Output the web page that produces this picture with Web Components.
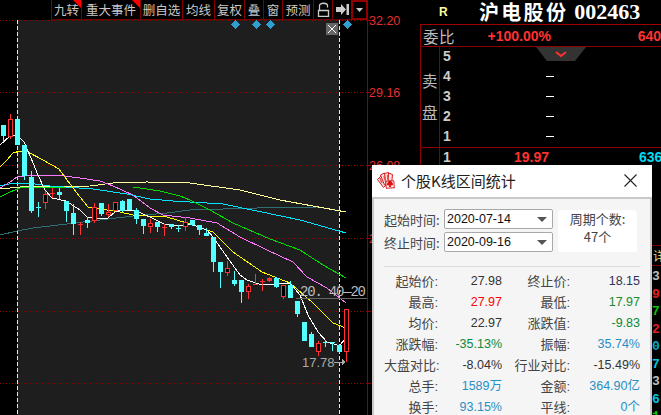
<!DOCTYPE html>
<html lang="zh"><head><meta charset="utf-8"><title>K</title>
<style>html,body{margin:0;padding:0;background:#000;overflow:hidden;width:661px;height:415px}
body{font-family:"Liberation Sans","Noto Sans CJK SC",sans-serif}</style></head><body>
<trade-app>
<tool-bar slot="bar">
<tool-btn w="30" flag>九转</tool-btn><tool-btn w="59" flag>重大事件</tool-btn><tool-btn w="42">删自选</tool-btn><tool-btn w="32">均线</tool-btn><tool-btn w="30">复权</tool-btn><tool-btn w="19">叠</tool-btn><tool-btn w="19">窗</tool-btn><tool-btn w="31">预测</tool-btn>
<tool-btn w="19" icon="lock"></tool-btn><tool-btn w="19" icon="pin"></tool-btn><tool-btn w="15" icon="down" strong></tool-btn>
</tool-bar>
<quote-panel slot="quote"></quote-panel>
<stats-dialog slot="dialog">
<stat-row a="起始价:" b="27.98" c="终止价:" d="18.15" dc="#33335a"></stat-row>
<stat-row a="最高:" b="27.97" bc="#f00" c="最低:" d="17.97" dc="#1a8a2a"></stat-row>
<stat-row a="均价:" b="22.97" c="涨跌值:" d="-9.83" dc="#0a8a3a"></stat-row>
<stat-row a="涨跌幅:" b="-35.13%" bc="#0a8a3a" c="振幅:" d="35.74%" dc="#2a8fc4"></stat-row>
<stat-row a="大盘对比:" b="-8.04%" c="行业对比:" d="-15.49%"></stat-row>
<stat-row a="总手:" b="1589万" bc="#2a8fc4" c="金额:" d="364.90亿" dc="#2a8fc4"></stat-row>
<stat-row a="换手:" b="93.15%" bc="#2a8fc4" c="平线:" d="0个" dc="#2a8fc4"></stat-row>
</stats-dialog>
</trade-app>
<script>
const def=(n,c)=>customElements.define(n,c);
class Base extends HTMLElement{constructor(){super();this.attachShadow({mode:'open'})}}
def('trade-app',class extends Base{connectedCallback(){this.shadowRoot.innerHTML=`<style>
:host{display:block;position:relative;width:661px;height:415px;overflow:hidden;background:#000}
.main{display:flex;width:661px;height:415px}
.left{width:420px;height:415px;position:relative;flex:none}
.bar{position:absolute;right:53px;top:0}
::slotted(stats-dialog){position:absolute;left:372px;top:165px}
</style>
<div class="main"><div class="left"><k-chart></k-chart><div class="bar"><slot name="bar"></slot></div></div><slot name="quote"></slot></div>
<slot name="dialog"></slot>`}});
def('tool-bar',class extends Base{connectedCallback(){this.shadowRoot.innerHTML=`<style>:host{display:flex;height:20px;box-sizing:border-box;border-right:1px solid #900000}</style><slot></slot>`}});
def('tool-btn',class extends Base{connectedCallback(){
const w=this.getAttribute('w'),ic=this.getAttribute('icon');
const icons={lock:`<svg width="13" height="15" viewBox="0 0 13 15"><path d="M1.500 8.500h10v6h-10z" fill="none" stroke="#ccc" stroke-width="1.300"/><path d="M2.500 8V3.500C2.500 .5 10.500 .5 10.500 3.500V5.500" fill="none" stroke="#ccc" stroke-width="1.300"/></svg>`,
pin:`<svg width="13" height="11" viewBox="0 0 13 11"><path d="M0 3h5V0l5 5.500L5 11V8H0z" fill="#ccc"/><rect x="10.500" y="0" width="2.500" height="11" fill="#ccc"/></svg>`,
down:`<svg width="7" height="4" viewBox="0 0 7 4"><path d="M0 0h7L3.500 4z" fill="#ccc"/></svg>`};
this.shadowRoot.innerHTML=`<style>:host{display:flex;position:relative;align-items:center;justify-content:center;box-sizing:border-box;width:${w}px;height:20px;border-left:1px solid #800000;border-bottom:1px solid ${this.hasAttribute('strong')?'#b00000':'#700000'};color:#c8c8c8;font:12.5px/19px "Noto Sans CJK SC",sans-serif;white-space:nowrap}
${this.hasAttribute('strong')?':host{border:2px solid #900000;border-right:0}':''}
i{position:absolute;right:0;top:0;border-top:8px solid #f00;border-left:8px solid transparent}</style>
${ic?icons[ic]:'<slot></slot>'}${this.hasAttribute('flag')?'<i></i>':''}`}});

const candles=[
[3.5,125,136,125,142,0],[10.5,119,137,114,139,1],[17.5,119,145,119,145,0],[24.5,145,176,145,180,0],[31.5,177,211,171,213,0],[38.5,207,208,202,217,0,1],[45.5,194,203,191,209,1],[52.5,193,194,188,198,1,1],[59.5,192,195,188,199,0],[66.500,201,211,201,222,0],[73.5,213,224,204,235,0],[80.5,224,225,222,235,1,1],[87.5,220,223,217,228,0],[94.5,207,221,203,223,1],[101.5,203,214,203,216,0],[108.5,212,215,204,217,1],[115.5,202,211,202,211,1],[122.5,201,211,200,212,0],[129.5,199,210,199,210,0],[136.5,210,219,208,224,0],[143.5,219,226,219,234,0],[150.5,223,227,219,233,1],[157.5,222,227,222,232,0],[164.5,227,228,224,236,1,1],[171.5,224,227,224,229,0],[178.5,228,229,225,232,0,1],[185.5,222,227,217,231,1],
[192.5,220,225,220,226,0],[199.5,225,230,225,235,0],[206.5,233,236,228,236,0],[213.5,237,262,237,272,0],[220.5,262,272,262,288,0],[227.5,268,273,261,276,1],[234.5,280,284,271,286,0],[241.5,280,292,280,303,0],[248.5,286,292,284,299,1],[255.5,284,285,274,285,1,1],[262.5,281,282,279,291,1,1],[269.5,278,281,277,282,1,2],[276.5,278,287,277,288,0],[283.5,285,297,285,299,1],[290.5,285,298,281,298,0],[297.5,301,314,301,317,0],[304.5,322,341,322,341,0],[311.5,334,347,332,347,0],[318.5,343,352,341,356,1],[325.5,342,343,340,347,0,1],[332.5,342,343,342,351,0,1],[339.5,345,352,345,353,0],[346.5,309,352,309,362,1]];
const lines=[
['#2f6f73','0,235 17,231 33,228 67,224 100,220 133,216 167,213 190,210 257,208 317,207 346,212'],
['#ffff99','0,189 20,187 90,186 113,183 147,182 190,183 240,190 280,200 313,206 346,212'],
['#00e5ff','0,186 13,183 27,183 50,186 93,189 127,194 150,199 173,201 190,202 223,204 257,211 300,220 346,233'],
['#00dd00','0,197 10,192 20,188 67,187 133,187 160,191 180,196 190,200 210,210 233,223 270,239 300,250 323,265 346,278'],
['#ff77ff','0,188 10,182 17,177 33,175 57,175 80,178 100,181 113,186 133,195 150,208 163,215 190,218 217,223 240,237 267,250 293,262 307,277 327,288 346,303'],
['#ffff00','0,167 7,160 13,153 20,151 28,152 43,160 59,169 67,180 80,197 88,207 107,210 120,212 133,215 147,216 167,217 190,224 213,232 233,252 262,272 290,283 313,303 333,323 346,328'],
['#ffffff','0,145 10,136 17,135 24,142 31,158 38,175 45,190 52,198 66,201 80,210 87,217 94,218 108,218 115,212 122,210 136,211 150,217 164,224 178,226 190,224 207,230 213,237 227,257 240,275 247,280 262,285 290,283 300,295 308,315 318,332 327,342 337,345 340,345 346,338']];
def('k-chart',class extends Base{connectedCallback(){
const R='#ff3232',C='#54ffff';
let c='';
for(const [x,t,b,wt,wb,up,kind] of candles){const col=up?R:C;
 c+=`<rect x="${Math.floor(x)}" y="${wt}" width="1" height="${wb-wt}" fill="${col}"/>`;
 if(kind==1)c+=`<rect x="${Math.floor(x)-2}" y="${t}" width="5" height="1" fill="${col}"/>`;
 else if(up&&kind!=2)c+=`<rect x="${x-2.5+.5}" y="${t+.5}" width="4" height="${b-t-1}" fill="#000" stroke="${col}"/>`;
 else c+=`<rect x="${x-2.5}" y="${t}" width="5" height="${b-t}" fill="${col}"/>`;}
const grid=[20,92,165,238,311,383].map(y=>`<path d="M0 ${y+.5}H367" stroke="#9a0000" stroke-dasharray="1 2"/><path d="M367 ${y+.5}h4" stroke="#900000"/>`).join('');
const labels=[[25,'32.20'],[97,'29.16'],[169.500,'26.08'],[243,'2']].map(([y,t])=>`<text x="369" y="${y}" fill="#e23030" font-size="12.5" font-family="Liberation Sans">${t}</text>`).join('');
const diamonds=[235,256,270,347].map(x=>`<path d="M${x-4.5} 24.500L${x} 20L${x+4.500} 24.500L${x} 29z" fill="#2f9fcf"/>`).join('');
this.shadowRoot.innerHTML=`<style>:host{display:block;width:420px;height:415px}svg{display:block}</style>
<svg width="420" height="415" viewBox="0 0 420 415" shape-rendering="crispEdges">
<rect x="17" y="20" width="322" height="395" fill="#1e1e1e"/>
${grid}
<path d="M17.500 20V415M339.500 20V415" stroke="#ffff33" stroke-dasharray="4 2"/>
<path d="M367.500 0V415" stroke="#900000"/>
${lines.map(([col,p])=>`<polyline points="${p}" fill="none" stroke="${col}" stroke-width="1"/>`).join('')}
${c}
<rect x="296" y="298" width="71" height="1" fill="#666"/>
<svg x="296" y="280" width="71" height="20"><text x="4" y="16" fill="#bbb" font-size="14" font-family="Liberation Mono" style="letter-spacing:-1.200px">20. 40—20.</text></svg>
<text x="302" y="367" fill="#aaa" font-size="13" font-family="Liberation Sans">17.78</text>
<path d="M334 362h11" stroke="#aaa"/><path d="M342 359l4 3-4 3z" fill="#aaa"/>
${diamonds}
<rect x="326" y="23" width="12" height="12" fill="#666"/><path d="M328 25l8 8M336 25l-8 8" stroke="#fff" shape-rendering="auto"/>
${labels}
</svg>`}});

def('quote-panel',class extends Base{connectedCallback(){
const sell=[5,4,3,2,1].map(n=>`<div class="r"><b class="n">${n}</b>${n<5?'<i class="dash"></i>':''}</div>`).join('');
const bottom=[['3.','#bbb'],['9.','#e02020'],['7.','#00c800'],['2.','#e02020'],['0.','#00aacc'],['7','#00c8e0'],['3.','#bbb'],['6','#00c8e0'],['1','#00c800']].map(([t,c])=>`<div style="color:${c}">${t}</div>`).join('');
this.shadowRoot.innerHTML=`<style>
:host{display:block;width:241px;height:415px;overflow:hidden;flex:none;color:#ccc;font-family:"Liberation Sans","Noto Sans CJK SC",sans-serif}
.head{height:24px;display:flex;align-items:center;padding-left:19px;color:#fff;white-space:nowrap}
.R{color:#ffff99;font:bold 12px "Liberation Sans";width:40px}
.name{font:700 20px/24px "Noto Sans CJK SC",sans-serif;letter-spacing:2.300px}
.code{font:700 22px/24px "Liberation Serif",serif;margin-left:6px}
.box{border-left:1px solid #900000;border-top:1px solid #a00000;height:390px;box-sizing:border-box}
.wb{height:21px;border-bottom:1px solid #900000;display:flex;align-items:center;font-weight:700;font-size:14px;color:#ff3232;white-space:nowrap;margin-left:1px}
.wb span:first-child{font:400 15.500px "Noto Sans CJK SC";color:#bbb;width:66px;padding-left:1px;box-sizing:border-box;letter-spacing:.5px}
.wb .p{width:151px}
.sec{display:flex;height:100px;border-bottom:1px solid #900000;margin-left:1px;position:relative}
.side{width:17px;border-right:1px solid #800000;font:15.500px/32px "Noto Sans CJK SC";color:#bbb;display:flex;flex-direction:column;justify-content:center;padding-bottom:2px;box-sizing:content-box}
.rows{flex:1;margin-top:-1px}
.r{height:20px;display:flex;align-items:center;position:relative;padding-left:3px;font-size:14px;white-space:nowrap}
.n{width:10px;color:#ccc}
.dash{position:absolute;left:106px;top:10px;width:8px;height:1px;background:#fff}
.trap{position:absolute;left:114px;top:0;width:50px;height:14px;background:#333;clip-path:polygon(0 0,100% 0,78% 100%,22% 100%)}
.trap svg{position:absolute;left:19px;top:4px}
.buy{display:flex;height:97px;margin-left:1px;border-bottom:1px solid #800000}
.buy .side{padding:0}
.buy .r b.p{color:#ff3232;position:absolute;left:74px}
.buy .r b.v{position:absolute;left:199px}
.xq{height:19px;border-bottom:1px solid #800000;font:12px/19px "Noto Sans CJK SC";color:#e8e09a;padding-left:232px;white-space:nowrap}
.list{padding-left:231px;font:700 13px/17.500px "Liberation Mono";padding-top:2px}
</style>
<div class="head"><span class="R">R</span><span class="name">沪电股份</span><span class="code">002463</span></div>
<div class="box">
<div class="wb"><span>委比</span><span class="p">+100.00%</span><span>640</span></div>
<div class="sec"><div class="side"><span>卖</span><span>盘</span></div><div class="rows">${sell}</div>
<div class="trap"><svg width="12" height="7" viewBox="0 0 12 7"><path d="M1 1l5 4 5-4" fill="none" stroke="#ff3232" stroke-width="2"/></svg></div></div>
<div class="buy"><div class="side"></div><div class="rows">
<div class="r"><b class="n">1</b><b class="p">19.97</b><b class="v" style="color:#00d8f0">636</b></div>
<div class="r"><b class="n"></b><b class="v" style="color:#00d8f0">2</b></div></div></div>
<div class="xq">详</div>
<div class="list">${bottom}</div>
</div>`}});

def('date-select',class extends Base{connectedCallback(){this.shadowRoot.innerHTML=`<style>
:host{display:flex;align-items:center;justify-content:space-between;box-sizing:border-box;width:109px;height:20px;background:#fff;border:1px solid #a8a8a8;border-radius:2px;padding:0 5px 0 2px;font:12.500px "Liberation Sans";color:#111}
i{border-top:5px solid #555;border-left:5px solid transparent;border-right:5px solid transparent}</style><slot></slot><i></i>`}});

def('stat-row',class extends Base{connectedCallback(){const g=k=>this.getAttribute(k)||'';
this.shadowRoot.innerHTML=`<style>
:host{display:grid;grid-template-columns:54px 64px 68px 70px;height:21px;align-items:center;font:12.500px/21px "Liberation Sans","Noto Sans CJK SC",sans-serif;color:#333;white-space:nowrap}
span{text-align:right}.l{color:#444;font-size:13px}</style>
<span class="l">${g('a')}</span><span style="color:${g('bc')||'#333'}">${g('b')}</span><span class="l">${g('c')}</span><span style="color:${g('dc')||'#333'}">${g('d')}</span>`}});

def('stats-dialog',class extends Base{connectedCallback(){this.shadowRoot.innerHTML=`<style>
:host{display:block;width:280px;height:260px;background:#fff;font-family:"Liberation Sans","Noto Sans CJK SC",sans-serif;overflow:hidden}
.title{height:32px;box-sizing:border-box;padding:0 0 2px 4px;display:flex;align-items:center;font:15px "Noto Sans CJK SC",sans-serif;color:#222;gap:5px}
.title .x{margin-left:auto;margin-right:15px;display:flex}
.body{box-sizing:border-box;height:228px;margin:0;background:#f5f5f5;border:2px solid #c8c8c8;border-bottom:0;padding:9px 10px 0}
.top{display:flex;height:46px;border:0}
.dates{display:grid;grid-template-columns:60px 109px;row-gap:3px;align-items:center;font:13px "Noto Sans CJK SC";color:#444;white-space:nowrap;padding-top:1px;height:43px}
.count{margin:2px 0 0 5px;width:79px;height:42px;background:#fff;border-radius:3px;text-align:center;font:13px/18px "Noto Sans CJK SC";color:#444;white-space:nowrap;padding-top:0;box-sizing:border-box}
hr{border:0;border-top:1px solid #ddd;margin:12px 0 4px}
</style>
<div class="title"><svg width="20" height="18" viewBox="0 0 20 18">
<g stroke="#d62020" stroke-width="1" fill="#fbe4e4" stroke-linejoin="round">
<path d="M1.500 8.500l4-4 5 9-3 3z"/><path d="M4.500 4l4-2 3.500 10.500-3.500 1.500z"/><path d="M8.500 2.500l4-1 1.500 11-4 .5z"/><path d="M12.500 2l4 1.500-1 10-3.500-.5z"/><path d="M10 10h8v7h-8z" fill="#fff" transform="rotate(-4 14 13)"/></g>
<path d="M4 7l2 5M8 5l1.500 5M11.500 4l.5 5" stroke="#e85050" stroke-width="1.500"/>
<path d="M14 9c1 1.500 3 2.500 3 4.300 0 1.400-1.700 1.700-2.400.8l.6 1.900h-2.400l.6-1.900c-.7.9-2.400.6-2.400-.8C11 11.500 13 10.500 14 9z" fill="#e01010"/></svg>
<span>个股K线区间统计</span><span class="x"><svg width="13" height="13" viewBox="0 0 13 13"><path d="M.5.5l12 12M12.500.5l-12 12" stroke="#222" stroke-width="1.100" fill="none"/></svg></span></div>
<div class="body"><div class="top"><div class="dates"><span>起始时间:</span><date-select>2020-07-14</date-select><span>终止时间:</span><date-select>2020-09-16</date-select></div>
<div class="count">周期个数:<br>47个</div></div>
<hr><slot></slot></div>`}});
</script></body></html>
